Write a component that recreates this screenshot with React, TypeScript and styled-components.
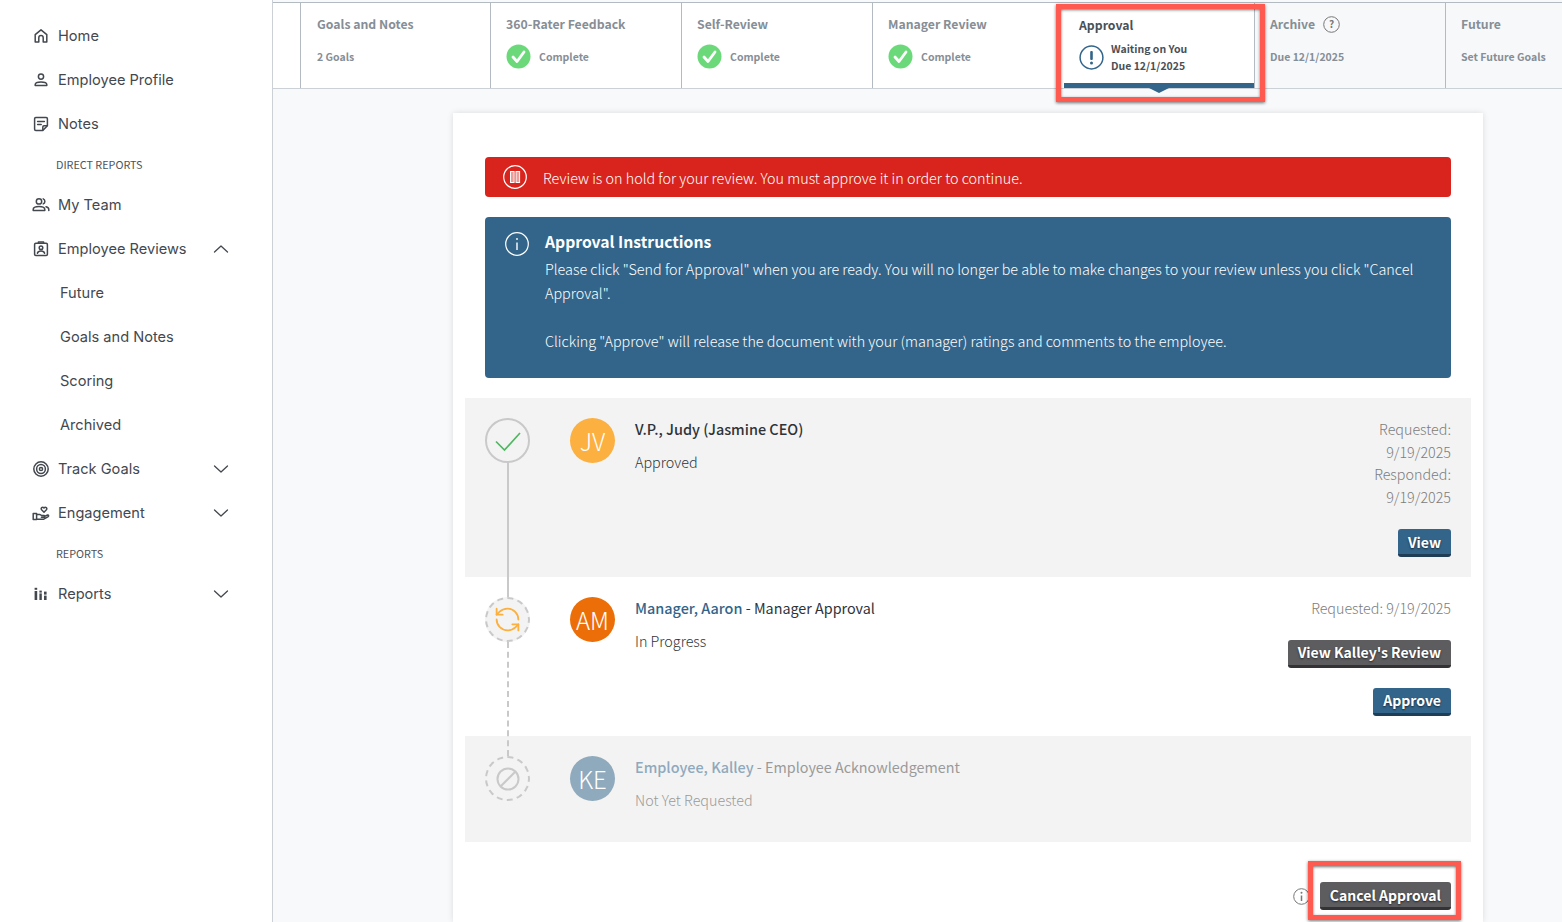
import React from "react";
import styled, { createGlobalStyle } from "styled-components";

const Global = createGlobalStyle`
  html, body { margin: 0; padding: 0; height: 100%; overflow: hidden; background: #fff; }
  * { box-sizing: border-box; }
  body { font-family: "Noto Sans CJK SC", "Source Sans Pro", "Noto Sans", sans-serif; }
`;

const Page = styled.div`
  display: flex;
  height: 922px;
  width: 1562px;
  overflow: hidden;
  position: relative;
`;

const Sidebar = styled.nav`
  width: 273px;
  flex: none;
  height: 100%;
  border-right: 1px solid #ccd1d8;
  padding: 14px 0 0 32px;
  font-family: Inter, "Noto Sans", sans-serif;
  color: #43484f;
`;

const NavRow = styled.div<{ $sub?: boolean }>`
  display: flex;
  align-items: center;
  height: 44px;
  font-size: 14.6px;
  padding-left: ${(p) => (p.$sub ? "28px" : "0")};
  width: 197px;
  position: relative;
`;

const NavIcon = styled.span`
  width: 26px;
  flex: none;
  display: flex;
  align-items: center;
  color: #43484f;
`;

const NavChevron = styled.span`
  margin-left: auto;
  display: flex;
`;

const NavLabel = styled.div`
  font-family: "Noto Sans CJK SC", sans-serif;
  font-size: 10.8px;
  color: #4e535a;
  height: 37px;
  display: flex;
  align-items: center;
  padding: 0 0 2px 24px;
`;

const Main = styled.main`
  flex: 1;
  min-width: 0;
  background: #f8f9fa;
  display: flex;
  flex-direction: column;
  padding-top: 2px;
`;

const TabBar = styled.div`
  display: flex;
  height: 87px;
  background: #fff;
  border-top: 1px solid #b4bac2;
  border-bottom: 1px solid #ccd1d8;
  padding-left: 27px;
  flex: none;
`;

const Tab = styled.div<{ $muted?: boolean; $active?: boolean; $first?: boolean }>`
  width: ${(p) => (p.$first ? "190px" : "191px")};
  flex: none;
  border-left: ${(p) => (p.$active ? "0" : "1px solid #b4bac2")};
  background: ${(p) => (p.$muted ? "#f7f8fa" : "#fff")};
  padding: ${(p) => (p.$active ? "12px" : "11px")} 0 0 ${(p) => (p.$active ? "16px" : p.$first ? "16px" : "15px")};
  position: relative;
  color: #868e96;
`;

const TabTitle = styled.div<{ $active?: boolean }>`
  font-size: 12.25px;
  line-height: 20px;
  font-weight: 600;
  color: ${(p) => (p.$active ? "#4a5057" : "#868e96")};
  display: flex;
  align-items: center;
  gap: 8px;
`;

const TabStatus = styled.div<{ $tight?: boolean }>`
  display: flex;
  align-items: center;
  gap: ${(p) => (p.$tight ? "7px" : "8px")};
  margin-top: 10px;
  height: 24px;
  font-size: 10.5px;
  font-weight: 600;
`;

const TabStack = styled.div`
  color: #4a5057;
  line-height: 17px;
`;

const ActiveBar = styled.div`
  position: absolute;
  left: 1px;
  right: 0;
  bottom: 0;
  height: 5px;
  background: #33658a;
  &::after {
    content: "";
    position: absolute;
    left: 85px;
    top: 5px;
    border-left: 10px solid transparent;
    border-right: 10px solid transparent;
    border-top: 5px solid #33658a;
  }
`;

const Card = styled.section`
  width: 1030px;
  margin: 24px 0 0 180px;
  background: #fff;
  padding: 44px 12px 0;
  box-shadow: 0 0 6px rgba(0, 0, 0, 0.12);
  flex: 1;
`;

const HoldAlert = styled.div`
  margin: 0 20px;
  height: 40px;
  background: #d8241c;
  border-radius: 4px;
  color: #fff;
  display: flex;
  align-items: center;
  padding-left: 18px;
  gap: 16px;
  font-size: 14.35px;
  font-weight: 300;
`;

const InfoAlert = styled.div`
  margin: 20px 20px 20px;
  height: 161px;
  background: #33658a;
  border-radius: 4px;
  color: #fff;
  display: flex;
  padding: 13px 20px 0 20px;
  gap: 16px;
  font-size: 14.35px;
  font-weight: 300;
  line-height: 24px;
`;

const InfoTitle = styled.div`
  font-size: 15.7px;
  font-weight: 700;
  margin-bottom: 3px;
`;

const InfoIcon = styled.span`
  flex: none;
  margin-top: 2px;
  display: flex;
  height: 24px;
`;

const Step = styled.div<{ $h: number; $shade?: boolean; $faded?: boolean }>`
  height: ${(p) => p.$h}px;
  background: ${(p) => (p.$shade ? "#f3f3f3" : "#fff")};
  padding: 20px 20px 0;
  display: flex;
  position: relative;
  color: ${(p) => (p.$faded ? "#9a9a9a" : "#2f3338")};
`;

const StepMark = styled.div<{ $dashed?: boolean }>`
  width: 45px;
  height: 45px;
  flex: none;
  border-radius: 50%;
  border: 2px ${(p) => (p.$dashed ? "dashed" : "solid")} #c9c9c9;
  background: #f3f3f3;
  display: flex;
  align-items: center;
  justify-content: center;
  position: relative;
  z-index: 1;
`;

const Connector = styled.div<{ $top: number; $h: number; $dashed?: boolean }>`
  position: absolute;
  left: 42px;
  top: ${(p) => p.$top}px;
  height: ${(p) => p.$h}px;
  border-left: 2px ${(p) => (p.$dashed ? "dashed" : "solid")} #c9c9c9;
  z-index: 1;
`;

const Avatar = styled.div<{ $color: string }>`
  width: 45px;
  height: 45px;
  flex: none;
  border-radius: 50%;
  background: ${(p) => p.$color};
  margin-left: 40px;
  color: #fff;
  font-size: 24px;
  font-weight: 300;
  display: flex;
  align-items: center;
  justify-content: center;
`;

const StepBody = styled.div`
  margin-left: 20px;
  flex: 1;
`;

const StepName = styled.div`
  font-size: 14.35px;
  line-height: 22px;
`;

const Strong = styled.span<{ $color?: string }>`
  font-weight: 500;
  font-size: 14.45px;
  color: ${(p) => p.$color ?? "inherit"};
`;

const StepStatus = styled.div`
  font-size: 14.35px;
  font-weight: 300;
  line-height: 22px;
  margin-top: 11px;
`;

const StepSide = styled.div`
  display: flex;
  flex-direction: column;
  align-items: flex-end;
  text-align: right;
  color: #7c7c7c;
  font-size: 14.3px;
  font-weight: 300;
  line-height: 22.5px;
`;

const Button = styled.button<{ $grey?: boolean; $mt?: number }>`
  height: 28px;
  border: 0;
  border-bottom: 3px solid ${(p) => (p.$grey ? "#333336" : "#1f3d55")};
  border-radius: 3px;
  background: ${(p) => (p.$grey ? "#5d5d60" : "#33658a")};
  color: #fff;
  font-family: inherit;
  font-size: 14px;
  font-weight: 700;
  padding: 0 10px;
  text-shadow: 0 1px 2px rgba(0, 0, 0, 0.6);
  margin-top: ${(p) => p.$mt ?? 0}px;
  display: flex;
  align-items: center;
`;

const CardFooter = styled.div`
  display: flex;
  justify-content: flex-end;
  align-items: center;
  gap: 10px;
  padding: 40px 20px 0 0;
`;

const Marker = styled.div<{ $x: number; $y: number; $w: number; $h: number }>`
  position: absolute;
  left: ${(p) => p.$x}px;
  top: ${(p) => p.$y}px;
  width: ${(p) => p.$w}px;
  height: ${(p) => p.$h}px;
  border: 5px solid #ff5a4f;
  box-shadow: 0 1px 3px rgba(0, 0, 0, 0.55), inset 0 1px 3px rgba(0, 0, 0, 0.55);
  pointer-events: none;
  z-index: 5;
`;

const Ico = (p: { children: React.ReactNode }) => (
  <svg width={18} height={18} viewBox="0 0 18 18" fill="none" stroke="currentColor" strokeWidth="1.5" strokeLinecap="round" strokeLinejoin="round">
    {p.children}
  </svg>
);

const HomeIcon = () => <Ico><path d="M3.2 15V7.6L9 2.8l5.8 4.8V15h-3.6v-4.2a2.2 2.2 0 0 0-4.4 0V15H3.2z" /></Ico>;
const UserIcon = () => <Ico><circle cx="9" cy="5.6" r="2.6" /><path d="M3.2 14.6v-1c0-1.5 2.6-2.6 5.8-2.6s5.8 1.1 5.8 2.6v1H3.2z" /></Ico>;
const NoteIcon = () => <Ico><path d="M2.6 3.8c0-.7.5-1.2 1.2-1.2h10.4c.7 0 1.2.5 1.2 1.2v7L10.8 15.4H3.8c-.7 0-1.2-.5-1.2-1.2V3.8z" /><path d="M5.6 6.6h6.8M5.6 9.6h3.6M10.8 15v-3c0-.7.5-1.2 1.2-1.2h3" /></Ico>;
const TeamIcon = () => <Ico><circle cx="7" cy="5.4" r="2.7" /><path d="M1.2 14.4v-1c0-1.8 2.6-2.9 5.8-2.9s5.8 1.1 5.8 2.9v1H1.2z" /><path d="M11.2 2.9a2.7 2.7 0 0 1 0 5M14 10.8c1.7.5 2.8 1.4 2.8 2.6v1" /></Ico>;
const ReviewIcon = () => <Ico><rect x="2.6" y="3.2" width="12.8" height="12.2" rx="1.2" /><path d="M6.4 3.2V2h5.2v1.2" /><circle cx="9" cy="7.8" r="1.8" /><path d="M5.4 13.2c.4-1.6 1.8-2.2 3.6-2.2s3.2.6 3.6 2.2" /></Ico>;
const TargetIcon = () => <Ico><circle cx="9" cy="9" r="7.2" /><circle cx="9" cy="9" r="4.4" /><circle cx="9" cy="9" r="1.6" /></Ico>;
const HandIcon = () => <Ico><rect x="1.2" y="9.4" width="3.4" height="6" /><path d="M4.6 10.4h3l2.4 1.2h2.2c.8 0 .8 1.6 0 1.6H9.4M12.4 12.4l3.2-1.4c1-.3 1.4 1 .6 1.6l-4.4 2.6H4.6" /><path d="M12 8.2 9.6 5.8c-1.4-1.5.9-3.6 2.4-1.8 1.5-1.8 3.8.3 2.4 1.8L12 8.2z" /></Ico>;
const BarsIcon = () => (
  <svg width="18" height="18" viewBox="0 0 18 18" fill="currentColor">
    <rect x="2.6" y="6" width="2.6" height="9" /><rect x="2.6" y="2.8" width="2.6" height="2" /><rect x="7.4" y="8.4" width="2.4" height="6.6" /><rect x="7.4" y="5.6" width="2.4" height="2" /><rect x="12" y="10.6" width="2.6" height="4.4" /><rect x="12" y="6.6" width="2.6" height="3" />
  </svg>
);
const Chevron = ({ up }: { up?: boolean }) => (
  <svg width="16" height="10" viewBox="0 0 16 10" fill="none" stroke="#43484f" strokeWidth="1.3" strokeLinecap="round" strokeLinejoin="round">
    <path d={up ? "M1.5 8 8 2l6.5 6" : "M1.5 2 8 8l6.5-6"} />
  </svg>
);

const GreenCheck = () => (
  <svg width="25" height="25" viewBox="0 0 25 25">
    <circle cx="12.5" cy="12.5" r="12" fill="#6bd97a" />
    <path d="M7 13l4 4.5L18 8" fill="none" stroke="#fff" strokeWidth="2.8" strokeLinecap="round" strokeLinejoin="round" />
  </svg>
);

const navTop = [
  { t: "Home", i: <HomeIcon /> },
  { t: "Employee Profile", i: <UserIcon /> },
  { t: "Notes", i: <NoteIcon /> },
];

const tabs = ["360-Rater Feedback", "Self-Review", "Manager Review"];

export default function App() {
  return (
    <Page>
      <Global />
      <Sidebar>
        {navTop.map((n) => (
          <NavRow key={n.t}><NavIcon>{n.i}</NavIcon>{n.t}</NavRow>
        ))}
        <NavLabel>DIRECT REPORTS</NavLabel>
        <NavRow><NavIcon><TeamIcon /></NavIcon>My Team</NavRow>
        <NavRow><NavIcon><ReviewIcon /></NavIcon>Employee Reviews<NavChevron><Chevron up /></NavChevron></NavRow>
        {["Future", "Goals and Notes", "Scoring", "Archived"].map((t) => (
          <NavRow $sub key={t}>{t}</NavRow>
        ))}
        <NavRow><NavIcon><TargetIcon /></NavIcon>Track Goals<NavChevron><Chevron /></NavChevron></NavRow>
        <NavRow><NavIcon><HandIcon /></NavIcon>Engagement<NavChevron><Chevron /></NavChevron></NavRow>
        <NavLabel>REPORTS</NavLabel>
        <NavRow><NavIcon><BarsIcon /></NavIcon>Reports<NavChevron><Chevron /></NavChevron></NavRow>
      </Sidebar>

      <Main>
        <TabBar>
          <Tab $first>
            <TabTitle>Goals and Notes</TabTitle>
            <TabStatus>2 Goals</TabStatus>
          </Tab>
          {tabs.map((t) => (
            <Tab key={t}>
              <TabTitle>{t}</TabTitle>
              <TabStatus><GreenCheck />Complete</TabStatus>
            </Tab>
          ))}
          <Tab $active>
            <TabTitle $active>Approval</TabTitle>
            <TabStatus $tight>
              <svg width="25" height="25" viewBox="0 0 25 25">
                <circle cx="12.5" cy="12.5" r="11.4" fill="none" stroke="#33658a" strokeWidth="1.5" />
                <rect x="11.2" y="6" width="2.6" height="9" rx="1" fill="#33658a" />
                <circle cx="12.5" cy="18" r="1.5" fill="#33658a" />
              </svg>
              <TabStack>Waiting on You<br />Due 12/1/2025</TabStack>
            </TabStatus>
            <ActiveBar />
          </Tab>
          <Tab $muted>
            <TabTitle>
              Archive
              <svg width="17" height="17" viewBox="0 0 17 17">
                <circle cx="8.5" cy="8.5" r="7.8" fill="none" stroke="#777" strokeWidth="1" />
                <text x="8.5" y="12" textAnchor="middle" fontSize="10" fill="#777" fontFamily="Noto Sans CJK SC">?</text>
              </svg>
            </TabTitle>
            <TabStatus>Due 12/1/2025</TabStatus>
          </Tab>
          <Tab $muted>
            <TabTitle>Future</TabTitle>
            <TabStatus>Set Future Goals</TabStatus>
          </Tab>
        </TabBar>

        <Card>
          <HoldAlert>
            <svg width="24" height="24" viewBox="0 0 24 24" fill="none" stroke="#fff">
              <circle cx="12" cy="12" r="11.3" strokeWidth="1.2" />
              <rect x="7.5" y="6.5" width="3.6" height="11" strokeWidth="1" fill="#fff" fillOpacity="0.55" />
              <rect x="13" y="6.5" width="3.6" height="11" strokeWidth="1" fill="#fff" fillOpacity="0.55" />
            </svg>
            Review is on hold for your review. You must approve it in order to continue.
          </HoldAlert>
          <InfoAlert>
            <InfoIcon>
              <svg width="24" height="24" viewBox="0 0 24 24" fill="none" stroke="#fff">
                <circle cx="12" cy="12" r="11.3" strokeWidth="1.2" />
                <path d="M12 10.5V18" strokeWidth="1.4" />
                <circle cx="12" cy="7" r="0.9" fill="#fff" stroke="none" />
              </svg>
            </InfoIcon>
            <div>
              <InfoTitle>Approval Instructions</InfoTitle>
              Please click "Send for Approval" when you are ready. You will no longer be able to make changes to your review unless you click "Cancel Approval".
              <br /><br />
              Clicking "Approve" will release the document with your (manager) ratings and comments to the employee.
            </div>
          </InfoAlert>

          <Step $h={179} $shade>
            <StepMark>
              <svg width="28" height="24" viewBox="0 0 28 24" fill="none" stroke="#4fb860" strokeWidth="1.7"><path d="M2 12.5l8.5 8.5L26 4" /></svg>
            </StepMark>
            <Connector $top={65} $h={134} />
            <Avatar $color="#fbb040">JV</Avatar>
            <StepBody>
              <StepName><Strong>V.P., Judy (Jasmine CEO)</Strong></StepName>
              <StepStatus>Approved</StepStatus>
            </StepBody>
            <StepSide>
              Requested:<br />9/19/2025<br />Responded:<br />9/19/2025
              <Button $mt={21}>View</Button>
            </StepSide>
          </Step>

          <Step $h={159}>
            <StepMark $dashed>
              <svg width="29" height="29" viewBox="0 0 24 24" fill="none" stroke="#fbb040" strokeWidth="1.5" strokeLinecap="round" strokeLinejoin="round" style={{ transform: "scaleX(-1)" }}>
                <path d="M3 12a9 9 0 0 1 9-9 9.75 9.75 0 0 1 6.74 2.74L21 8" />
                <path d="M21 3v5h-5" />
                <path d="M21 12a9 9 0 0 1-9 9 9.75 9.75 0 0 1-6.74-2.74L3 16" />
                <path d="M8 16H3v5" />
              </svg>
            </StepMark>
            <Connector $top={65} $h={114} $dashed />
            <Avatar $color="#eb6e08">AM</Avatar>
            <StepBody>
              <StepName><Strong $color="#33658a">Manager, Aaron</Strong> - Manager Approval</StepName>
              <StepStatus>In Progress</StepStatus>
            </StepBody>
            <StepSide>
              Requested: 9/19/2025
              <Button $grey $mt={20}>View Kalley's Review</Button>
              <Button $mt={20}>Approve</Button>
            </StepSide>
          </Step>

          <Step $h={106} $shade $faded>
            <StepMark $dashed>
              <svg width="24" height="24" viewBox="0 0 24 24" fill="none" stroke="#c9c9c9" strokeWidth="2">
                <circle cx="12" cy="12" r="10.5" /><path d="M19 5 5 19" />
              </svg>
            </StepMark>
            <Avatar $color="#8fa9bd">KE</Avatar>
            <StepBody>
              <StepName><Strong $color="#8fa9bd">Employee, Kalley</Strong> - Employee Acknowledgement</StepName>
              <StepStatus>Not Yet Requested</StepStatus>
            </StepBody>
          </Step>

          <CardFooter>
            <svg width="17" height="17" viewBox="0 0 17 17" fill="none" stroke="#777">
              <circle cx="8.5" cy="8.5" r="7.8" strokeWidth="1" />
              <path d="M8.5 7.5V13" strokeWidth="1.5" />
              <circle cx="8.5" cy="4.8" r="1" fill="#777" stroke="none" />
            </svg>
            <Button $grey>Cancel Approval</Button>
          </CardFooter>
        </Card>
      </Main>

      <Marker $x={1056} $y={4} $w={209} $h={98} />
      <Marker $x={1308} $y={861} $w={153} $h={59} />
    </Page>
  );
}
